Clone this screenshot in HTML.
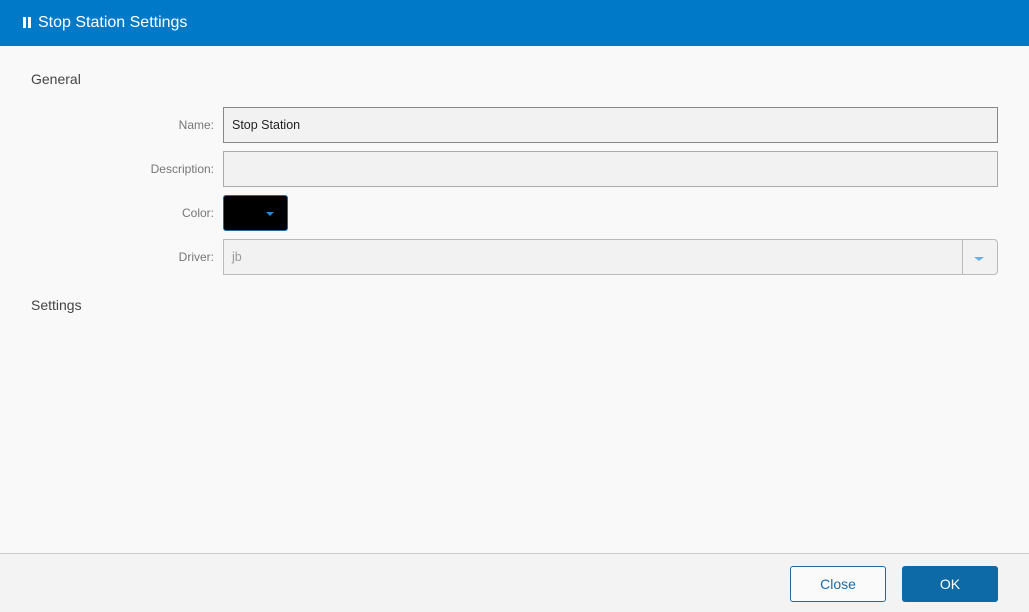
<!DOCTYPE html>
<html><head><style>
*{box-sizing:border-box;margin:0;padding:0}
body{width:1029px;height:612px;background:#f9f9f9;font-family:"Liberation Sans",sans-serif;position:relative;overflow:hidden}
.hdr{position:absolute;left:0;top:0;width:1029px;height:46px;background:#0079c8;color:#fff;font-size:16px;line-height:46px;padding-left:23px}
.bar{display:inline-block;width:3px;height:11px;background:#fff;margin-right:2px;vertical-align:-1px}
.sec{position:absolute;left:31px;font-size:14px;color:#444}
.lbl{position:absolute;right:815px;font-size:12px;color:#777;text-align:right}
.inp{position:absolute;left:223px;width:775px;height:36px;background:#f2f2f2;border:1px solid #aaa;font-size:12.5px;line-height:34px;padding-left:8px;color:#222}
.foot{position:absolute;left:0;top:553px;width:1029px;height:59px;background:#f3f3f3;border-top:1px solid #ccc}
.btn{position:absolute;top:566px;height:36px;width:96px;border-radius:3px;font-size:14px;text-align:center;line-height:34px}
</style></head><body>
<div class="hdr"><span class="bar"></span><span class="bar" style="margin-right:7px"></span>Stop Station Settings</div>
<div class="sec" style="top:71px">General</div>
<div class="lbl" style="top:118px">Name:</div>
<div class="inp" style="top:107px;border-color:#888">Stop Station</div>
<div class="lbl" style="top:162px">Description:</div>
<div class="inp" style="top:151px"></div>
<div class="lbl" style="top:206px">Color:</div>
<div style="position:absolute;left:223px;top:195px;width:65px;height:36px;background:#000;border:1px solid #1a6aa8;border-radius:3px"><div style="position:absolute;left:42px;top:16px;border-left:4px solid transparent;border-right:4px solid transparent;border-top:4px solid #2a8ad8"></div></div>
<div class="lbl" style="top:250px">Driver:</div>
<div class="inp" style="top:239px;border-color:#bbb;color:#999;border-radius:0 4px 4px 0">jb
<div style="position:absolute;right:34px;top:0;width:1px;height:34px;background:#bbb"></div>
<div style="position:absolute;right:13px;top:17px;border-left:5px solid transparent;border-right:5px solid transparent;border-top:4px solid #6ab0e0"></div></div>
<div class="sec" style="top:297px">Settings</div>
<div class="foot"></div>
<div class="btn" style="left:790px;border:1px solid #1a6aa8;color:#1a6aa8;background:#fafafa">Close</div>
<div class="btn" style="left:902px;background:#0d6aa6;color:#fff;line-height:36px">OK</div>
</body></html>
